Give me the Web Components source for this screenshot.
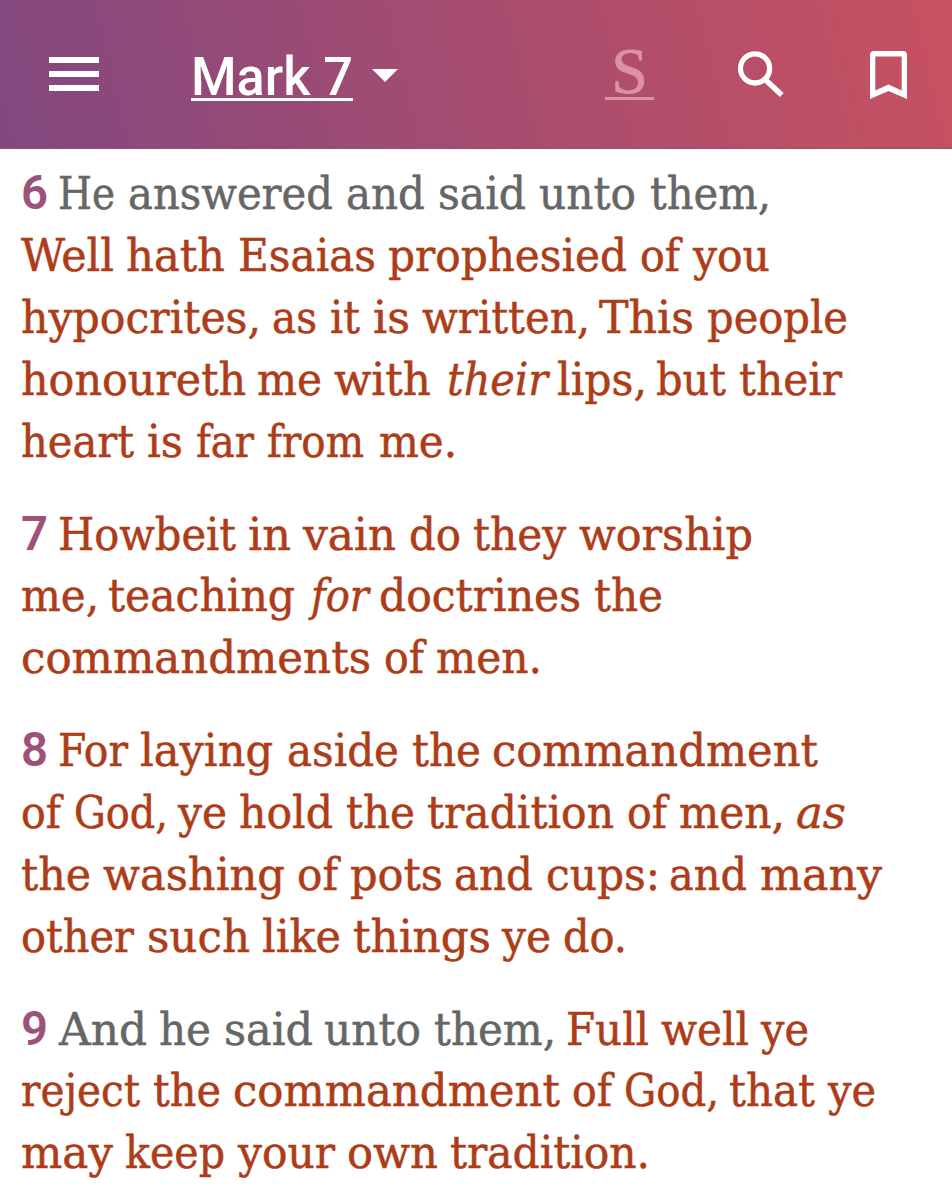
<!DOCTYPE html>
<html lang="en">
<head>
<meta charset="utf-8">
<title>Mark 7</title>
<style>
body { margin: 0; background: #fff; }
</style>
</head>
<body>
<reader-app></reader-app>
<script>
class ReaderBar extends HTMLElement {
  connectedCallback() {
    this.attachShadow({ mode: 'open' }).innerHTML = `
<style>
:host { display: flex; align-items: flex-start; box-sizing: border-box; height: 149px; padding-left: 49px;
  background: linear-gradient(77deg, #82487f 0%, #a34c71 46%, #c75160 100%); border-bottom: 1px solid #8d5070;
  color: #fff; font-family: Roboto, sans-serif; }
svg { display: block; flex: none; }
.menu { margin-top: 57px; }
.title { margin: 49px 0 0 92px; width: 162px; height: 49px; border-bottom: 3px solid #fff; box-sizing: content-box; }
.caret { margin: 69px 0 0 19px; }
.strong { margin: 44px 0 0 207px; width: 49px; height: 53px; border-bottom: 3px solid #dc91a7; color: #dc91a7;
  font: 66px/54px "Liberation Serif", serif; text-align: center; -webkit-text-stroke: 0.8px #dc91a7; }
.search { margin: 51px 0 0 84px; }
.mark { margin: 51px 0 0 85px; }
fit-run { font-size: 53px; font-weight: 500; line-height: 56px; }
</style>
<svg class="menu" width="50" height="34"><path fill="#fff" d="M0 0h50v6H0zM0 14h50v6H0zM0 28h50v6H0z"/></svg>
<div class="title"><fit-run w="162">Mark 7</fit-run></div>
<svg class="caret" width="26" height="13"><path fill="#fff" d="M0 0h26L13 13z"/></svg>
<div class="strong">S</div>
<svg class="search" width="47" height="47" fill="none" stroke="#fff"><circle cx="17" cy="17.400" r="14.600" stroke-width="5.300"/><path stroke-width="5.500" d="M28.400 29.700 43.800 44.100"/><path stroke-width="3.500" d="m26.500 27.500 4 4"/></svg>
<svg class="mark" width="38" height="48"><path fill="#fff" fill-rule="evenodd" d="M4 0h29q4 0 4 4v44L18.500 40 0 48V4q0-4 4-4ZM5.300 5.600V39.500L18.500 33.500 31.700 39.500V5.600Z"/></svg>`;
  }
}

class FitRun extends HTMLElement {
  connectedCallback() {
    const w = Number(this.getAttribute('w'));
    const gap = Number(this.getAttribute('gap') || 0);
    this.attachShadow({ mode: 'open' }).innerHTML = `
<style>
:host { display: block; flex: none; width: ${w}px; margin-left: ${gap}px; white-space: nowrap; }
span { display: inline-block; transform-origin: 0 50%; }
</style><span><slot></slot></span>`;
    const span = this.shadowRoot.querySelector('span');
    span.style.transform = `scaleX(${w / span.getBoundingClientRect().width})`;
  }
}

class BibleVerse extends HTMLElement {
  connectedCallback() {
    this.attachShadow({ mode: 'open' }).innerHTML = `
<style>
:host { display: block; margin-bottom: 31px; color: #ad3d18; -webkit-text-stroke: 0.5px currentcolor;
  font: 45px/61.85px "Roboto Slab", "DejaVu Serif Condensed", "DejaVu Serif", serif; font-stretch: condensed; }
</style><slot></slot>`;
  }
}

class VerseLine extends HTMLElement {
  connectedCallback() {
    this.attachShadow({ mode: 'open' }).innerHTML = `
<style>
:host { display: flex; height: 61.85px; }
::slotted(.n) { color: #9e527a; font-family: Roboto, sans-serif; font-weight: 600; font-size: 48px; line-height: 60px; font-stretch: normal; -webkit-text-stroke: 0; }
::slotted(.g) { color: #666; -webkit-text-stroke: 0.5px #666; }
::slotted(.i) { font-style: italic; }
</style><slot></slot>`;
  }
}

/* Each entry is [word, left edge, right edge, kind]: n = verse number, g = narration, i = supplied word. */
const verses = [
  [
    [['6', 22, 48, 'n'], ['He', 59, 114, 'g'], ['answered', 129, 332, 'g'], ['and', 347, 424, 'g'], ['said', 439, 525, 'g'], ['unto', 540, 635, 'g'], ['them,', 651, 768, 'g']],
    [['Well', 22, 113], ['hath', 127, 224], ['Esaias', 239, 375], ['prophesied', 389, 626], ['of', 641, 680], ['you', 694, 769]],
    [['hypocrites,', 22, 258], ['as', 273, 316], ['it', 331, 359], ['is', 374, 409], ['written,', 423, 587], ['This', 600, 693], ['people', 708, 847]],
    [['honoureth', 22, 245], ['me', 258, 321], ['with', 335, 430], ['their', 448, 547, 'i'], ['lips,', 558, 644], ['but', 657, 725], ['their', 740, 841]],
    [['heart', 22, 133], ['is', 148, 182], ['far', 197, 253], ['from', 268, 363], ['me.', 380, 454]]
  ],
  [
    [['7', 22, 48, 'n'], ['Howbeit', 59, 235], ['in', 249, 290], ['vain', 304, 395], ['do', 410, 460], ['they', 474, 565], ['worship', 580, 752]],
    [['me,', 22, 96], ['teaching', 109, 294], ['for', 312, 368, 'i'], ['doctrines', 380, 580], ['the', 595, 662]],
    [['commandments', 22, 370], ['of', 385, 424], ['men.', 437, 539]]
  ],
  [
    [['8', 22, 48, 'n'], ['For', 59, 127], ['laying', 141, 272], ['aside', 288, 398], ['the', 413, 480], ['commandment', 493, 817]],
    [['of', 22, 61], ['God,', 75, 165], ['ye', 179, 226], ['hold', 240, 332], ['the', 347, 414], ['tradition', 428, 613], ['of', 628, 667], ['men,', 680, 782], ['as', 797, 845, 'i']],
    [['the', 22, 90], ['washing', 104, 284], ['of', 298, 338], ['pots', 351, 442], ['and', 455, 532], ['cups:', 547, 657], ['and', 670, 746], ['many', 761, 881]],
    [['other', 22, 133], ['such', 148, 249], ['like', 263, 340], ['things', 354, 490], ['ye', 503, 550], ['do.', 564, 624]]
  ],
  [
    [['9', 22, 48, 'n'], ['And', 60, 146, 'g'], ['he', 160, 210, 'g'], ['said', 225, 312, 'g'], ['unto', 325, 420, 'g'], ['them,', 435, 553, 'g'], ['Full', 567, 648], ['well', 662, 748], ['ye', 762, 808]],
    [['reject', 22, 139], ['the', 154, 220], ['commandment', 234, 559], ['of', 573, 612], ['God,', 625, 716], ['that', 730, 814], ['ye', 829, 875]],
    [['may', 22, 112], ['keep', 126, 224], ['your', 239, 334], ['own', 348, 437], ['tradition.', 451, 647]]
  ]
];

class ReaderApp extends HTMLElement {
  connectedCallback() {
    const lines = v => v.map(l => {
      let x = 0;
      return '<verse-line>' + l.map(([t, left, right, c = '']) => {
        const start = left - 1;
        const end = c === 'n' ? right : right + (/[.,:]$/.test(t) ? 3 : t === 'of' ? 0 : 1);
        const gap = start - x;
        x = end;
        return `<fit-run class="${c}" gap="${gap}" w="${end - start}">${t}</fit-run>`;
      }).join(' ') + '</verse-line>';
    }).join('');
    this.attachShadow({ mode: 'open' }).innerHTML = `
<style>
:host { display: block; width: 952px; height: 1200px; overflow: hidden; background: #fff; }
main { padding-top: 14.4px; }
</style>
<reader-bar></reader-bar>
<main>${verses.map(v => `<bible-verse>${lines(v)}</bible-verse>`).join('')}</main>`;
  }
}
customElements.define('reader-bar', ReaderBar);
customElements.define('bible-verse', BibleVerse);
customElements.define('verse-line', VerseLine);
customElements.define('reader-app', ReaderApp);
customElements.define('fit-run', FitRun);
</script>
</body>
</html>
